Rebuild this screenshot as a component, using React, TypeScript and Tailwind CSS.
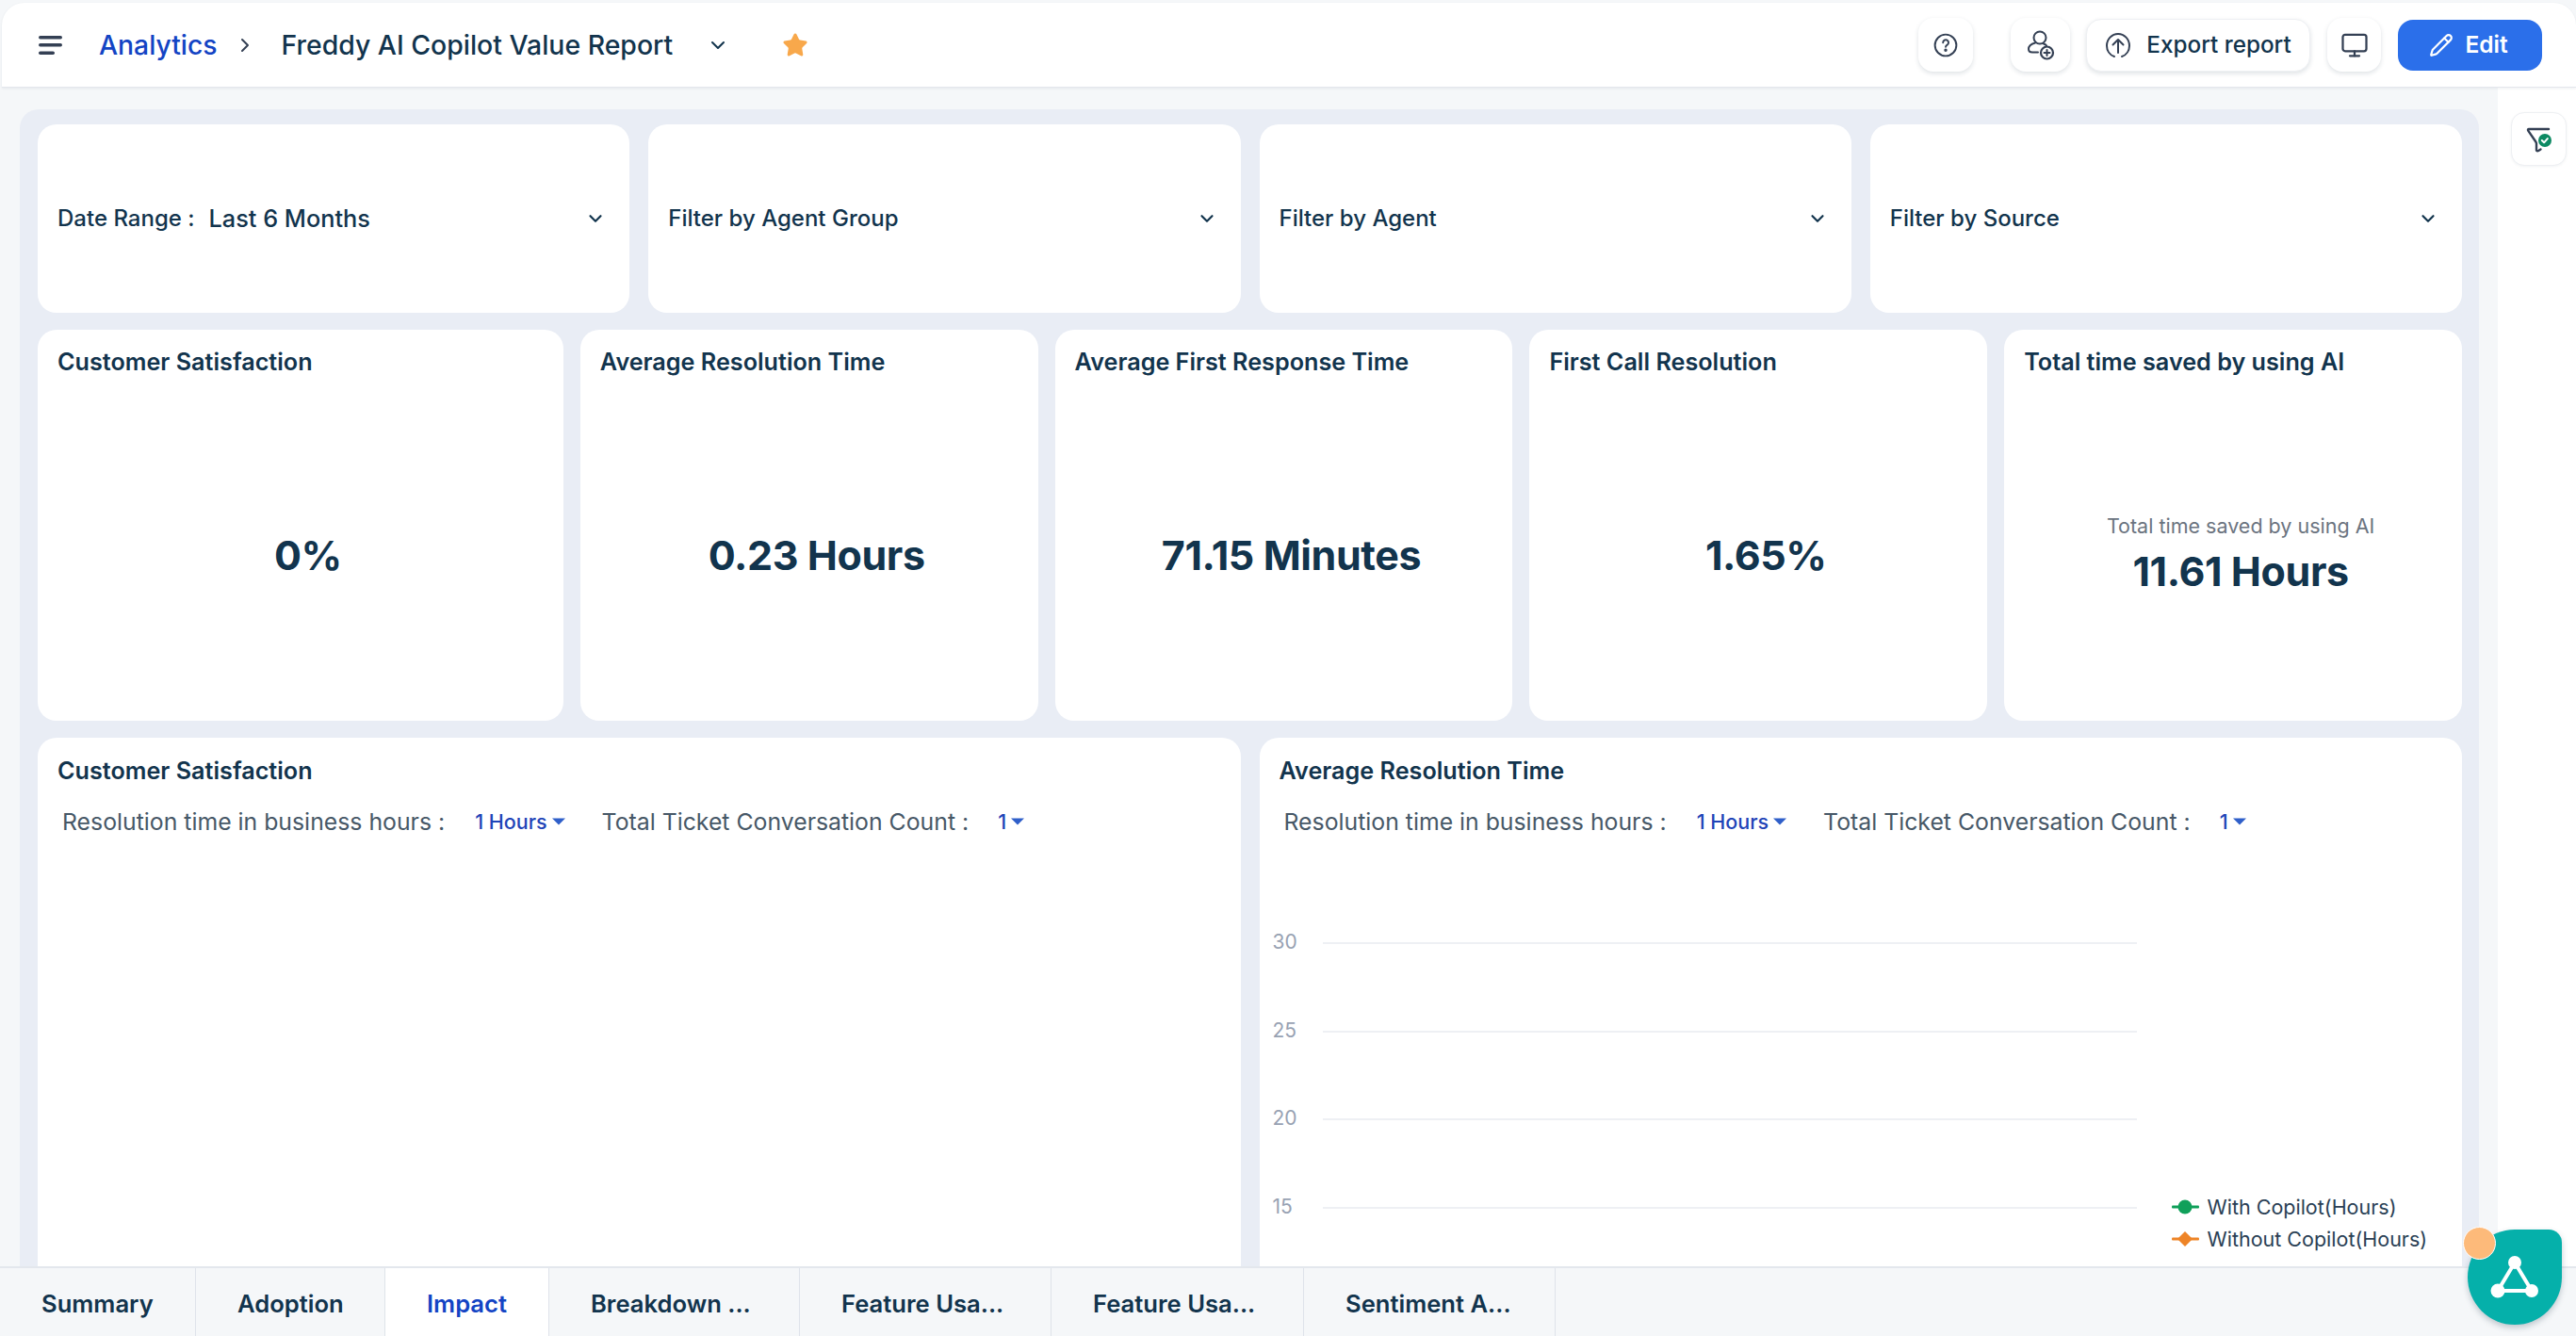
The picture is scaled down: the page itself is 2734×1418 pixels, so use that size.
import React from "react";
import { ChevronDown, ChevronRight, Monitor, Pencil, Star } from "lucide-react";

const Help = () => (
  <svg width="26" height="26" viewBox="0 0 24 24" fill="none" stroke="#344054" strokeWidth="1.8" strokeLinecap="round">
    <circle cx="12" cy="12" r="10.5" />
    <path d="M9.4 9.4a2.7 2.7 0 1 1 4.1 2.3c-.9.6-1.5 1-1.5 2" />
    <circle cx="12" cy="16.8" r=".7" fill="#344054" />
  </svg>
);

const UserPlus = () => (
  <svg width="30" height="32" viewBox="0 0 30 32" fill="none" stroke="#344054" strokeWidth="2" strokeLinecap="round">
    <circle cx="14" cy="8" r="6.5" />
    <path d="M9 13.5C4 15 2 17.5 2 20c0 2.5 2 3.500 4 3.500h6" />
    <path d="M18 14.5c1.5.5 2.5 1 3 2" />
    <circle cx="21.5" cy="24" r="6.5" strokeWidth="2.2" />
    <path d="M21.5 21v6M18.5 24h6" strokeWidth="2" />
  </svg>
);

const Upload = () => (
  <svg width="28" height="28" viewBox="0 0 28 28" fill="none" stroke="#344054" strokeWidth="2" strokeLinecap="round" strokeLinejoin="round">
    <path d="M10 26C5 24.400 2 19.600 2 14.500 2 7.600 7.400 2 14 2s12 5.600 12 12.500c0 5.100-3 9.900-8 11.500" />
    <path d="M14 22V8M8.500 13.500 14 8l5.500 5.500" />
  </svg>
);

const FilterCheck = () => (
  <svg width="30" height="32" viewBox="0 0 30 32" fill="none">
    <path d="M4 5h21M4 5c-1 0-1.300.8-.8 1.600L11 18c.6.900 1 1.600 1 2.600v7c0 .8 1.500.8 2.500.2l2-1.300" stroke="#344054" strokeWidth="2.400" strokeLinecap="round" strokeLinejoin="round" />
    <circle cx="21" cy="17" r="7" fill="#0d8a63" />
    <path d="m17.800 17 2.300 2.300 3.700-4.200" stroke="#ffffff" strokeWidth="2" strokeLinecap="round" strokeLinejoin="round" />
  </svg>
);

const Burger = () => (
  <svg width="26" height="22" viewBox="0 0 26 22" fill="#344054">
    <rect x="0" y="1" width="25" height="3.500" rx="1.700" />
    <rect x="0" y="9" width="25" height="3.500" rx="1.700" />
    <rect x="0" y="17.500" width="17" height="3.500" rx="1.700" />
  </svg>
);

const Network = () => (
  <svg width="52" height="48" viewBox="0 0 52 48" fill="none">
    <path d="M26 8 8 38h36Z" stroke="#ffffff" strokeWidth="4" strokeLinejoin="round" />
    <circle cx="26" cy="8" r="7" fill="#ffffff" />
    <circle cx="8" cy="38" r="7.500" fill="#ffffff" />
    <circle cx="44" cy="38" r="7" fill="#ffffff" />
  </svg>
);

const Caret = () => (
  <svg width="14" height="8" viewBox="0 0 14 8" className="ml-[5px]">
    <path d="M0 .5h14L7 7.500Z" fill="#2f5fc9" />
  </svg>
);

const Filter = ({ children }: { children: React.ReactNode }) => (
  <div className="flex h-[200px] items-center justify-between rounded-[20px] bg-white pl-[21px] pr-[25px]">
    <div className="flex items-center text-[24px] font-medium text-[#12344d]">{children}</div>
    <ChevronDown className="text-[#12344d]" size={22} strokeWidth={2.4} />
  </div>
);

const Kpi = ({ title, value, label }: { title: string; value: string; label?: string }) => (
  <div className="flex h-[415px] flex-col rounded-[20px] bg-white">
    <div className="h-[63px] pl-[21px] pt-[18px] text-[25.200px] font-semibold leading-[32px] text-[#12344d]">{title}</div>
    <div className="flex flex-1 flex-col items-center justify-center pl-[16px]">
      {label && <div className="mb-[3px] text-[21.500px] leading-[30px] text-[#6b7480]">{label}</div>}
      <div className="text-[43px] font-bold leading-[60px] tracking-[-0.4px] text-[#12344d]">{value}</div>
    </div>
  </div>
);

const Controls = () => (
  <div className="flex items-center pl-[26px] text-[24.800px] leading-[32px] text-[#475867]">
    <span>Resolution time in business hours :</span>
    <span className="ml-[32px] flex items-center text-[21.500px] font-medium text-[#1f44b8]">1 Hours<Caret /></span>
    <span className="ml-[39px]">Total Ticket Conversation Count :</span>
    <span className="ml-[31px] flex items-center text-[21.500px] font-medium text-[#1f44b8]">1<Caret /></span>
  </div>
);

const tickRows = ["30", "25", "20", "15"];

const IconBtn = ({ children, w }: { children: React.ReactNode; w: string }) => (
  <div className={`flex h-[57px] items-center justify-center rounded-[16px] bg-white shadow-[0_2px_5px_rgba(24,50,71,0.14)] ${w}`}>{children}</div>
);

const tabs = [
  ["Summary", "w-[208px]"],
  ["Adoption", "w-[201px]"],
  ["Impact", "w-[174px]"],
  ["Breakdown ...", "w-[266px]"],
  ["Feature Usa...", "w-[267px]"],
  ["Feature Usa...", "w-[268px]"],
  ["Sentiment A...", "w-[267px]"],
];

export default function App() {
  return (
    <div className="relative flex h-[1418px] w-full flex-col overflow-hidden bg-[#f5f7f9] font-['Inter',sans-serif]">
      <header className="relative z-10 mt-[3px] ml-[2px] flex h-[90px] shrink-0 items-center rounded-t-[24px] border-b border-[#e3e7ed] bg-white pl-[39px] pr-[36px] shadow-[0_1px_3px_rgba(24,50,71,0.08)]">
        <Burger />
        <span className="ml-[38px] mt-[1px] text-[28.300px] font-medium text-[#1344c4]">Analytics</span>
        <ChevronRight className="ml-[17px] text-[#344054]" size={24} strokeWidth={2} />
        <span className="ml-[27px] mt-[1px] text-[28.400px] font-medium text-[#12344d]">Freddy AI Copilot Value Report</span>
        <ChevronDown className="ml-[36px] text-[#12344d]" size={24} strokeWidth={2} />
        <Star className="ml-[56px] text-[#f8a84b]" size={28} fill="#f8a84b" strokeWidth={1.500} />
        <div className="ml-auto flex items-center">
          <IconBtn w="w-[58px]"><Help /></IconBtn>
          <IconBtn w="w-[63px] ml-[40px]"><UserPlus /></IconBtn>
          <div className="ml-[17px] flex h-[56px] w-[238px] items-center justify-center rounded-[16px] border border-[#eef0f3] bg-white text-[24.300px] font-medium text-[#12344d] shadow-[0_2px_5px_rgba(24,50,71,0.14)]">
            <Upload />
            <span className="ml-[16px]">Export report</span>
          </div>
          <IconBtn w="w-[57px] ml-[18px]"><Monitor className="text-[#344054]" size={30} strokeWidth={1.800} /></IconBtn>
          <div className="ml-[18px] flex h-[54px] w-[153px] items-center justify-center rounded-[16px] bg-[#2b6fea] pr-[3px] text-[24.500px] font-semibold text-white">
            <Pencil size={26} strokeWidth={2} />
            <span className="ml-[12px]">Edit</span>
          </div>
        </div>
      </header>

      <div className="flex min-h-0 flex-1">
        <main className="min-w-0 flex-1 overflow-hidden pl-[21px] pr-[20px] pt-[23px]">
          <div className="rounded-[20px] bg-[#e9edf5] pl-[19px] pr-[18px] pt-[16px]">
            <div className="grid grid-cols-4 gap-[20px]">
              <Filter>
                <span>Date Range :</span>
                <span className="ml-[15px] text-[25.300px]">Last 6 Months</span>
              </Filter>
              <Filter>Filter by Agent Group</Filter>
              <Filter>Filter by Agent</Filter>
              <Filter>Filter by Source</Filter>
            </div>
            <div className="mt-[18px] grid grid-cols-[558fr_486fr_486fr_486fr_486fr] gap-[18px]">
              <Kpi title="Customer Satisfaction" value="0%" />
              <Kpi title="Average Resolution Time" value="0.23 Hours" />
              <Kpi title="Average First Response Time" value="71.15 Minutes" />
              <Kpi title="First Call Resolution" value="1.65%" />
              <Kpi title="Total time saved by using AI" value="11.61 Hours" label="Total time saved by using AI" />
            </div>
            <div className="mt-[18px] grid grid-cols-2 gap-[20px]">
              <div className="h-[700px] rounded-[20px] bg-white pt-[19px]">
                <div className="pl-[21px] text-[25.200px] font-semibold leading-[32px] text-[#12344d]">Customer Satisfaction</div>
                <div className="mt-[22px]"><Controls /></div>
              </div>
              <div className="relative h-[700px] rounded-[20px] bg-white pt-[19px]">
                <div className="pl-[21px] text-[25.200px] font-semibold leading-[32px] text-[#12344d]">Average Resolution Time</div>
                <div className="mt-[22px]"><Controls /></div>
                <div className="mt-[112px] flex flex-col">
                  {tickRows.map((t) => (
                    <div key={t} className="flex h-[93.700px] items-start">
                      <span className="-mt-[14px] w-[67px] pl-[14px] text-[21px] leading-[28px] text-[#98a2b3]">{t}</span>
                      <div className="h-[2px] w-[864px] bg-[#eef0f4]" />
                    </div>
                  ))}
                </div>
                <div className="absolute left-[968px] top-[484px] flex flex-col gap-[6px] text-[21.500px] leading-[28px] text-[#2a3f55]">
                  <div className="flex items-center">
                    <svg width="29" height="16" viewBox="0 0 29 16" className="mr-[9px]"><rect x="0" y="6.500" width="29" height="3" rx="1" fill="#10a05a" /><circle cx="14" cy="8" r="7.500" fill="#10a05a" /></svg>
                    With Copilot(Hours)
                  </div>
                  <div className="flex items-center">
                    <svg width="29" height="16" viewBox="0 0 29 16" className="mr-[9px]"><rect x="0" y="6.500" width="29" height="3" rx="1" fill="#ee8427" /><path d="m14 0 8 8-8 8-8-8Z" fill="#ee8427" /></svg>
                    Without Copilot(Hours)
                  </div>
                </div>
              </div>
            </div>
          </div>
        </main>
        <aside className="w-[83px] shrink-0 bg-white pl-[14px] pt-[26px]">
          <div className="flex h-[57px] w-[59px] items-center justify-center rounded-[14px] border border-[#eef0f3] bg-white shadow-[0_1px_3px_rgba(24,50,71,0.06)]">
            <FilterCheck />
          </div>
        </aside>
      </div>

      <nav className="relative z-10 flex h-[74px] shrink-0 border-t-2 border-[#e3e7ed] bg-[#f5f7f9]">
        {tabs.map(([label, w], i) => (
          <div
            key={i}
            className={`flex items-center border-r border-[#dfe3ea] pl-[44px] pt-[5px] text-[25.600px] font-semibold ${w} ${label === "Impact" ? "bg-white text-[#1344c4]" : "text-[#12344d]"}`}
          >
            {label}
          </div>
        ))}
      </nav>

      <div className="absolute left-[2619px] top-[1305px] z-20 flex h-[101px] w-[100px] items-center justify-center rounded-[50%_14px_50%_50%] bg-[#05b0aa] shadow-[0_3px_6px_rgba(24,50,71,0.25)]">
        <Network />
      </div>
      <div className="absolute left-[2614px] top-[1302px] z-30 h-[35px] w-[35px] rounded-full border border-white bg-[#fdba7a]" />
    </div>
  );
}
